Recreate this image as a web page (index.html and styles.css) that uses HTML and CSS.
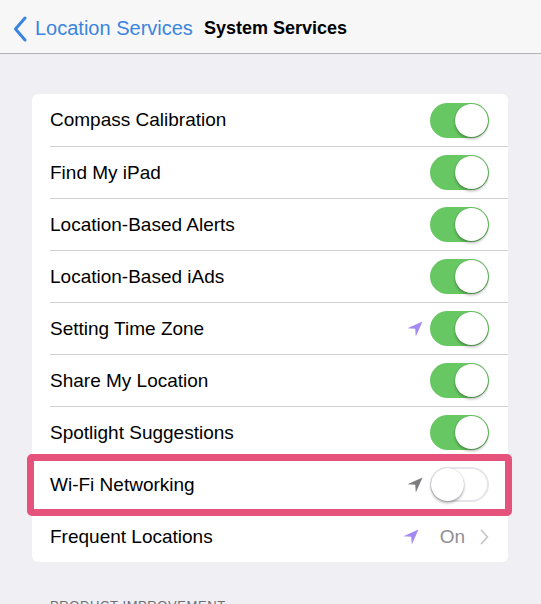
FILE: index.html
```html
<!DOCTYPE html>
<html lang="en">
<head>
	<meta charset="UTF-8" />
	<meta name="viewport" content="width=device-width, initial-scale=1.0" />
	<title>System Services</title>
	<link rel="stylesheet" href="styles.css">
</head>
<body>
	<header class="navbar">
		<a class="back" href="#">
			<svg class="chevron-left" width="14" height="26" viewBox="0 0 14 26"><path d="M12 2 L2.5 13 L12 24" fill="none" stroke="currentColor" stroke-width="3" stroke-linecap="round" stroke-linejoin="round"/></svg>
			<span>Location Services</span>
		</a>
		<h1>System Services</h1>
	</header>

	<main class="content">
		<div class="group" id="services"></div>
		<div class="group-title">Product Improvement</div>
	</main>

	<script>
		const services = [
			{ name: 'Compass Calibration', on: true },
			{ name: 'Find My iPad', on: true },
			{ name: 'Location-Based Alerts', on: true },
			{ name: 'Location-Based iAds', on: true },
			{ name: 'Setting Time Zone', on: true, arrow: 'purple' },
			{ name: 'Share My Location', on: true },
			{ name: 'Spotlight Suggestions', on: true },
			{ name: 'Wi-Fi Networking', on: false, arrow: 'grey', marked: true },
			{ name: 'Frequent Locations', value: 'On', arrow: 'purple' }
		];

		const arrowSvg = color => `<svg class="arrow ${color}" width="16" height="16" viewBox="0 0 16 16"><path d="M15.5 0.5 L0.5 7.2 L8.2 7.8 L8.8 15.5 Z" fill="currentColor"/></svg>`;

		function renderServices() {
			const group = document.getElementById('services');
			services.forEach(s => {
				const el = document.createElement('div');
				el.className = 'row' + (s.marked ? ' marked' : '');
				let right = s.arrow ? arrowSvg(s.arrow) : '';
				if (s.value) {
					right += `<span class="value">${s.value}</span>
						<svg class="chevron-right" width="9" height="16" viewBox="0 0 9 16"><path d="M1.5 1.5 L7.5 8 L1.5 14.5" fill="none" stroke="currentColor" stroke-width="1.8" stroke-linecap="round" stroke-linejoin="round"/></svg>`;
				} else {
					right += `<span class="switch${s.on ? ' on' : ''}"><span class="knob"></span></span>`;
				}
				el.innerHTML = `<span class="label">${s.name}</span><span class="accessory">${right}</span>`;
				group.appendChild(el);
			});
		}

		renderServices();
	</script>
</body>
</html>
```

FILE: styles.css
```css
body {
	font-family: "Liberation Sans", Arial, sans-serif;
	margin: 0;
	padding: 0;
	background: #efeff4;
	color: #000;
	width: 541px;
	height: 604px;
	overflow: hidden;
}
.navbar {
	display: flex;
	align-items: center;
	height: 49px;
	padding-top: 4px;
	background: #f7f7f7;
	border-bottom: 1px solid #b2b2b2;
	padding-left: 13px;
}
.back {
	display: flex;
	align-items: center;
	gap: 8px;
	color: #3a85e0;
	text-decoration: none;
	font-size: 20px;
}
.navbar h1 {
	margin: 0 0 0 11px;
	font-size: 18px;
	font-weight: bold;
}
.content {
	padding: 40px 33px 0 32px;
}
.group {
	background: #fff;
	border-radius: 6px;
}
.row {
	position: relative;
	display: flex;
	align-items: center;
	justify-content: space-between;
	height: 51px;
	margin-left: 18px;
	padding-right: 19px;
	border-bottom: 1px solid #d0d0d4;
	font-size: 19px;
}
.row:first-child {
	height: 52px;
}
.row:last-child {
	border-bottom: none;
}
.accessory {
	display: flex;
	align-items: center;
}
.arrow {
	margin-right: 7px;
}
.arrow.purple {
	color: #a489f2;
}
.arrow.grey {
	color: #7d7d80;
}
.value {
	color: #8e8e93;
	margin-left: 14px;
	margin-right: 15px;
}
.chevron-right {
	color: #c7c7cc;
}
.switch {
	position: relative;
	width: 59px;
	height: 35px;
	border-radius: 18px;
	background: #fff;
	box-shadow: inset 0 0 0 2px #e5e5ea;
}
.switch.on {
	background: #67c762;
	box-shadow: none;
}
.knob {
	position: absolute;
	top: 1px;
	left: 1px;
	width: 33px;
	height: 33px;
	border-radius: 50%;
	background: #fff;
	box-shadow: 0 2px 3px rgba(0, 0, 0, 0.3), 0 0 1px rgba(0, 0, 0, 0.25);
}
.switch.on .knob {
	left: 25px;
}

/* highlight frame round a row */
.row.marked::after {
	content: "";
	position: absolute;
	top: -5px;
	bottom: -6px;
	left: -23px;
	right: -4px;
	border: 7px solid #e5527b;
	border-radius: 5px;
	pointer-events: none;
}
.group-title {
	margin: 36px 0 0 18px;
	font-size: 13px;
	letter-spacing: 0.6px;
	text-transform: uppercase;
	color: #6d6d72;
}
```
